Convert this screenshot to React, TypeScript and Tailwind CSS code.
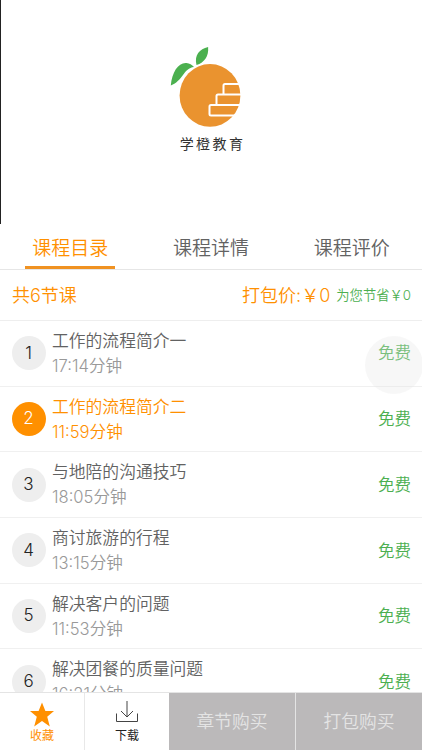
import { useState } from "react";
import clsx from "clsx";

const tabs = ["课程目录", "课程详情", "课程评价"];

const lessons = [
  { title: "工作的流程简介一", time: "17:14" },
  { title: "工作的流程简介二", time: "11:59" },
  { title: "与地陪的沟通技巧", time: "18:05" },
  { title: "商讨旅游的行程", time: "13:15" },
  { title: "解决客户的问题", time: "11:53" },
  { title: "解决团餐的质量问题", time: "16:21" },
];

function Logo() {
  return (
    <svg className="overflow-visible" width="76" height="84" viewBox="3.5 0 76 84">
      <ellipse cx="40.5" cy="50.4" rx="30.4" ry="31.4" fill="#ea932f" />
      <path d="M27 20C24.5 10 30 4 38.6 2C39.5 11 35 17.5 27 20Z" fill="#4bb04f" />
      <path
        d="M1.3 40.5C2.5 27 9 17.3 17 18.1C20 18.4 22.5 20 24.5 22C14 23 13.5 36 1.3 40.5Z"
        fill="#4bb04f"
      />
      <path
        d="M72 39H55.5Q54 39 54 40.5V49.5H48.5Q47 49.5 47 51V60H41.5Q40 60 40 61.5V69Q40 70.5 41.5 70.5H67M54 49.5H73M47 60H72"
        fill="none"
        stroke="#fff"
        strokeWidth="2"
      />
    </svg>
  );
}

export default function App() {
  const [tab, setTab] = useState(0);
  const [current, setCurrent] = useState(1);

  return (
    <div className="relative flex h-[750px] w-[422px] flex-col overflow-hidden bg-white font-['Inter','Noto_Sans_CJK_SC',sans-serif] font-[350] text-[#626262]">
      {/* Video cover */}
      <div className="flex h-[224px] shrink-0 flex-col items-center border-l border-[#222] pt-[45px]">
        <div className="pr-[1px]">
          <Logo />
        </div>
        <p className="mt-[5px] pl-[2px] text-[14px] leading-5 font-normal tracking-[2.4px] text-[#333]">
          学橙教育
        </p>
      </div>

      {/* Tabs */}
      <div className="flex h-[46px] shrink-0 justify-around border-b border-[#e6e6e6]">
        {tabs.map((name, i) => (
          <button
            key={name}
            onClick={() => setTab(i)}
            className={clsx(
              "w-[90px] border-b-3 pt-[8px] text-[19px]",
              i === tab ? "border-[#f09222] text-[#ff9000]" : "border-transparent"
            )}
          >
            {name}
          </button>
        ))}
      </div>

      {/* Package price */}
      <div className="flex h-[51px] shrink-0 items-center border-b border-[#eee] pr-[11px] pl-3 text-[18px] text-[#ff9000]">
        <span className="flex-1">共6节课</span>
        <span>打包价:￥0</span>
        <span className="ml-[6px] pt-px text-[13.3px] text-[#4caf50]">为您节省￥0</span>
      </div>

      {/* Lessons */}
      <div className="min-h-0 flex-1 overflow-hidden">
        {lessons.map((lesson, i) => (
          <div
            key={lesson.title}
            onClick={() => setCurrent(i)}
            className={clsx(
              "flex h-[65.7px] items-center border-b border-[#f0f0f0] pr-[11px] pl-[11.5px]",
              i === current && "text-[#ff9000]"
            )}
          >
            <span
              className={clsx(
                "flex size-[34px] items-center justify-center rounded-full text-[17px]",
                i === current ? "bg-[#ff9000] text-white" : "bg-[#eee] text-[#222]"
              )}
            >
              {i + 1}
            </span>
            <div className="ml-[6.5px] flex-1">
              <p className="text-[16.8px] leading-[26px]">{lesson.title}</p>
              <p className={clsx("text-[16.6px] leading-[25px]", i !== current && "text-[#999]")}>
                {lesson.time}分钟
              </p>
            </div>
            <span className="pt-px text-[16.5px] text-[#4caf50]">免费</span>
          </div>
        ))}
      </div>

      {/* Bottom bar */}
      <div className="flex h-[58px] shrink-0 border-t border-[#e4e4e4] text-[12px] font-normal">
        <button className="flex w-[84px] flex-col items-center pt-[8.5px] text-[#ff9000]">
          <svg width="26" height="26" viewBox="0 0 26 26" fill="currentColor">
            <path d="M13 0.5L16.4 9H25L18.2 14.8L20.8 24.5L13 19L5.2 24.5L7.8 14.8L1 9H9.6Z" />
          </svg>
          <span className="-mt-[0.5px] leading-[18px]">收藏</span>
        </button>
        <button className="flex w-[85px] flex-col items-center border-l border-[#e8e8e8] pt-[7px] text-[#222]">
          <svg width="24" height="24" viewBox="0 0 24 24" fill="none" stroke="#444">
            <path d="M12 1V17M6 11L12 17L18 11M1.5 13.5V21.5H22.5V13.5" />
          </svg>
          <span className="mt-[3px] leading-[18px]">下载</span>
        </button>
        <button className="w-[126px] bg-[#bbb9ba] pt-[2px] text-[17.8px] font-[350] text-[#e4e4e4]">
          章节购买
        </button>
        <button className="flex-1 border-l border-[#e4e4e4] bg-[#bbb9ba] pt-[2px] text-[17.8px] font-[350] text-[#e4e4e4]">
          打包购买
        </button>
      </div>

      {/* Floating assistive button */}
      <div className="absolute top-[336px] left-[365px] size-[58px] rounded-full bg-[#e6e6e6]/30" />
    </div>
  );
}
